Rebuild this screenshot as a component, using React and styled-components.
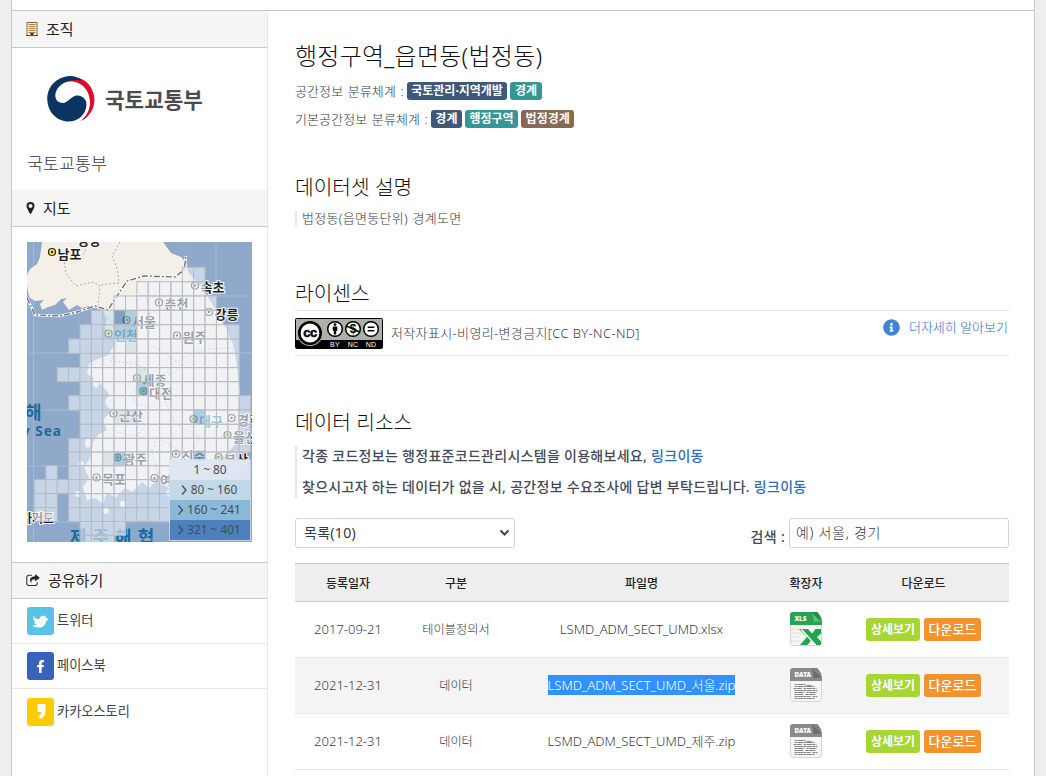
import React from "react";
import styled, { createGlobalStyle } from "styled-components";
import { FaInfoCircle, FaFacebookF } from "react-icons/fa";

const GlobalStyle = createGlobalStyle`
  *, *::before, *::after { box-sizing: border-box; }
  html, body { margin: 0; padding: 0; }
  body {
    height: 776px;
    overflow: hidden;
    background: #eeeeee;
    color: #343a45;
    font-family: "Noto Sans", "Noto Sans CJK KR", sans-serif;
    font-size: 13px;
    font-weight: 300;
  }
  h1, h2, h3, p, ul { margin: 0; padding: 0; font-weight: inherit; }
  a { color: inherit; text-decoration: none; }
`;

const Page = styled.div`
  width: 1024px;
  height: 776px;
  margin-left: 11px;
  padding-top: 10px;
  background: #fff;
  border: solid #c9c9c9;
  border-width: 0 1px;
`;

const Columns = styled.div`
  display: flex;
  height: 766px;
  border-top: 1px solid #c9c9c9;
`;

const Sidebar = styled.aside`
  width: 256px;
  flex: none;
  border-right: 1px solid #e6e7ee;
`;

const SideHeading = styled.h2`
  display: flex;
  align-items: center;
  height: 37px;
  padding: 0 14px 1px;
  gap: 8px;
  background: #f5f5f5;
  border-bottom: 1px solid #c9c9c9;
  border-top: ${(p) => (p.$ruled ? "1px solid #c9c9c9" : "0")};
  color: #222;
  font-size: 15px;
  font-weight: 400;
  line-height: 20px;
`;

const Organization = styled.div`
  display: flex;
  flex-direction: column;
  height: 142px;
  padding: 27px 15px 0;
`;

const OrgLogo = styled.div`
  display: flex;
  align-items: center;
  height: 49px;
  padding-left: 20px;
  gap: 9px;
  color: #4c4c4e;
  font-size: 21.3px;
  font-weight: 700;
  line-height: 46px;
`;

const OrgName = styled.a`
  margin-top: 24px;
  font-size: 17.4px;
  line-height: 30px;
`;

const MapPanel = styled.div`
  height: 335px;
  padding: 15px 15px 0;
  svg { display: block; }
`;

const ShareRow = styled.a`
  display: flex;
  align-items: center;
  height: 45px;
  padding-left: 15px;
  gap: 3px;
  border-bottom: ${(p) => (p.$last ? "0" : "1px solid #e6e7ee")};
  color: #3d434d;
  font-size: 13.2px;
  font-weight: 400;
  span { padding-bottom: 3px; }
`;

const ShareIcon = styled.i`
  display: flex;
  align-items: center;
  justify-content: center;
  width: 27px;
  height: 28px;
  border-radius: 3px;
  background: ${(p) => p.$color};
  color: #fff;
`;

const Main = styled.main`
  width: 714px;
  margin-left: 27px;
  padding-top: 25px;
`;

const Title = styled.h1`
  height: 41px;
  line-height: 40px;
  color: #111;
  font-size: 24px;
  letter-spacing: 0.25px;
  white-space: nowrap;
`;

const TagLine = styled.div`
  display: flex;
  align-items: center;
  height: 28px;
  gap: 3px;
  white-space: nowrap;
`;

const TagLabel = styled.span`
  padding-bottom: 2px;
  letter-spacing: 0.1px;
  word-spacing: 1px;
`;

const Tag = styled.span`
  height: 18px;
  padding: 0 4.500px;
  border-radius: 3px;
  background: ${(p) => p.$color};
  color: #fff;
  font-size: 12px;
  font-weight: 700;
  line-height: 18px;
`;

const SectionTitle = styled.h2`
  height: ${(p) => p.$height || 40}px;
  margin-top: ${(p) => p.$top}px;
  color: #111;
  font-size: 20.3px;
  line-height: 40px;
`;

const Description = styled.p`
  height: 16px;
  margin-top: 4px;
  padding-left: 5px;
  border-left: 2px solid #e6e7ee;
  letter-spacing: 0.3px;
  word-spacing: 1px;
  line-height: 15px;
`;

const License = styled.div`
  display: flex;
  align-items: center;
  height: 46px;
  border: solid #e6e7ee;
  border-width: 1px 0;
  gap: 8px;
  svg { flex: none; }
`;

const LicenseName = styled.span`
  padding-bottom: 2px;
  letter-spacing: 0.35px;
`;

const MoreLink = styled.a`
  display: flex;
  align-items: center;
  margin: 0 1px 11px auto;
  gap: 9px;
  color: #2a70c9;
  svg { color: #3f84d6; }
  span { padding-bottom: 2px; }
`;

const Notice = styled.div`
  display: flex;
  flex-direction: column;
  height: 52px;
  margin-top: 4px;
  padding-left: 5px;
  gap: 10px;
  border-left: 2px solid #e6e7ee;
  font-size: 14px;
  font-weight: 500;
  letter-spacing: 0.29px;
  line-height: 20px;
  white-space: nowrap;
  color: #444a55;
  p { height: 21px; }
  a { color: #2f6cb5; }
`;

const Toolbar = styled.div`
  display: flex;
  justify-content: space-between;
  height: 30px;
  margin-top: 20px;
  font-size: 14px;
`;

const Field = styled.div`
  display: flex;
  align-items: center;
  justify-content: space-between;
  width: 220px;
  height: 30px;
  padding: 0 4px 0 ${(p) => p.$inset}px;
  border: 1px solid #ced4e4;
  border-radius: 3px;
  background: #fff;
  letter-spacing: ${(p) => p.$tracking}px;
  line-height: 28px;
  font-weight: ${(p) => p.$weight || 300};
`;

const Search = styled.label`
  display: flex;
  gap: 4px;
  > span {
    padding-top: 9px;
    color: #444a55;
    font-weight: 500;
    letter-spacing: 0.3px;
    line-height: 20px;
  }
`;

const Row = styled.div`
  display: grid;
  grid-template-columns: 106px 110px 261px 68px 167px;
  align-items: center;
  justify-items: center;
  height: 56px;
  padding-bottom: 1px;
  background: ${(p) => (p.$shaded ? "#f4f4f4" : "#fff")};
  border-bottom: 1px solid #e6e7ee;
  font-size: 13px;
  white-space: nowrap;
`;

const HeaderRow = styled(Row)`
  height: 39px;
  margin-top: 15px;
  padding-bottom: 0;
  background: #eeeeee;
  border-top: 1px solid #c9c9c9;
  border-bottom: 1px solid #c9c9c9;
  color: #222;
  font-size: 12px;
  font-weight: 500;
`;

const Cell = styled.span`
  height: 20px;
  line-height: 20px;
  background: ${(p) => (p.$selected ? "#3390ff" : "transparent")};
  color: ${(p) => (p.$selected ? "#fff" : "inherit")};
`;

const TypeCell = styled(Cell)`
  font-size: 12.2px;
  line-height: 22px;
`;

const Actions = styled.div`
  display: flex;
  gap: 4px;
  padding-top: 1px;
`;

const Button = styled.a`
  width: ${(p) => p.$width}px;
  height: 23px;
  border-radius: 3px;
  background: ${(p) => p.$color};
  color: #fff;
  font-size: ${(p) => p.$size}px;
  font-weight: ${(p) => p.$weight};
  line-height: ${(p) => p.$line}px;
  text-align: center;
`;

const BuildingIcon = () => (
  <svg width="12" height="14" viewBox="0 0 12 14">
    <path d="M1 .5h10v13H1z" fill="#fff6e8" stroke="#9b5f2c" />
    <path d="M2.500 2.500h7M2.500 4.500h7M2.500 6.500h7M2.500 8.500h7M2.500 10.500h7" stroke="#b97b3d" />
    <path d="M4.500 11h3v3h-3z" fill="#333" />
    <path d="M0 13.500h12" stroke="#555" />
  </svg>
);

const PinIcon = () => (
  <svg width="9" height="12" viewBox="-.5 0 9 12">
    <path fillRule="evenodd" fill="#222" d="M4 0a4 4 0 0 1 4 4c0 1-.3 1.600-.7 2.400L4.700 11.600a.8.8 0 0 1-1.400 0L.7 6.400C.3 5.600 0 5 0 4a4 4 0 0 1 4-4Zm0 2a2 2 0 1 0 0 4 2 2 0 0 0 0-4Z" />
  </svg>
);

const ShareOutIcon = () => (
  <svg width="14" height="12" viewBox="0 0 14 12">
    <path fill="none" stroke="#333" strokeWidth="1.100" d="M6 1.200H2.800A2 2 0 0 0 .8 3.200v6.300a2 2 0 0 0 2 2h6.400a2 2 0 0 0 2-2V8.300" />
    <path fill="#222" d="M9.200 0 13.800 3.800 9.200 7.500V5.300C6.500 5.200 5 6 5.300 9.200 3 6 3.900 2.300 9.200 2.200Z" />
  </svg>
);

const BirdIcon = () => (
  <svg width="17" height="13" viewBox="0 0 17 13">
    <path fill="#fff" d="M1 1c2 2.400 4 3.100 6.500 3.200C7.600 1.500 9.800.2 12 .8c1 .2 1.700.8 2 1.700l2.500 2-2.100 1.200C13.700 10 10.700 12.700 6.500 12.600 4 12.600 2 11.900.4 10.500c1.900.1 3.200-.2 4.300-1C3.300 9.100 2.600 8.300 2.200 7.200l1.500-.1C2.200 6.300 1.400 5.200 1.300 3.900l1.400.4C1.500 3.300.8 2.500 1 1Z" />
  </svg>
);

const StoryMark = styled.svg`
  margin-left: 2px;
`;

const StoryIcon = () => (
  <StoryMark width="9" height="15" viewBox="0 0 9 15">
    <path fill="#fff" d="M.5 0h8v6.500c0 4.500-1.700 7.300-5 8.300L1.300 12.300C3.500 11.500 4.200 10 4.200 8H.5Z" />
  </StoryMark>
);

const TaegeukLogo = () => (
  <svg width="49" height="49" viewBox="0 0 49 49">
    <path fill="#df0a2c" d="M12 7.500C22 0 36 1 43 11c6 9 5.500 19 1 26-3 4.500-6 7.500-10.500 9C39.500 41 43 35 43 27.500 43 14 33 5.500 22 6.500 18 6.900 14.500 8.500 11 11Z" />
    <path fill="#0b3560" d="M23 1C9 2 0 12 .3 24.500.6 37 10 46.500 21.500 46.500c10 0 17.500-7.300 18-16.500.4-8.500-9-12.200-14.500-7.500-5.500 4.700-8 6.700-12.500 4.800C6 24.500 7.500 14.500 14 10 19 5.500 27 4 35.500 5.500 32 2.500 28 1 23 1Z" />
  </svg>
);

const CcBadge = () => (
  <svg width="88" height="31" viewBox="0 0 88 31" fontFamily="Liberation Sans, sans-serif">
    <rect x=".5" y=".5" width="87" height="30" rx="1" fill="#abb1a8" stroke="#000" />
    <path d="M1 22h86v8H1z" fill="#000" />
    <circle cx="15" cy="15" r="13" fill="#abb1a8" />
    <circle cx="15" cy="15" r="10.700" fill="#fff" stroke="#000" strokeWidth="2.600" />
    <text x="15" y="18.700" fontSize="13" fontWeight="700" textAnchor="middle" letterSpacing="-.4" stroke="#000" strokeWidth=".5">cc</text>
    <g fill="#fff" stroke="#000" strokeWidth="1.500">
      <circle cx="40" cy="11" r="7.300" /><circle cx="58" cy="11" r="7.300" /><circle cx="76" cy="11" r="7.300" />
    </g>
    <circle cx="40" cy="6.600" r="1.400" />
    <path d="M37.700 8.600h4.600v4.200h-1.100V16.500h-2.400v-3.700h-1.100z" />
    <text x="58" y="15.300" fontSize="12" fontWeight="700" textAnchor="middle">$</text>
    <path d="m51.500 8 13 6" stroke="#000" strokeWidth="1.500" />
    <path d="M72.700 9.300h6.600M72.700 12.700h6.600" stroke="#000" strokeWidth="1.500" />
    <g fill="#fff" fontSize="7" textAnchor="middle" letterSpacing=".3">
      <text x="40" y="28.800">BY</text><text x="58" y="28.800">NC</text><text x="76" y="28.800">ND</text>
    </g>
  </svg>
);

const FileIcon = ({ kind }) => {
  const xls = kind === "XLS";
  return (
    <svg width="32" height="34" viewBox="0 0 32 34" fontFamily="Noto Sans, sans-serif">
      {!xls && <path d="M0 0h32v34H0z" fill="#fff" />}
      <rect x=".5" y=".5" width="31" height="33" rx="2.500" fill="#f6f6f6" stroke="#d5d5d5" />
      <path d="M0 13V3a3 3 0 0 1 3-3h17.500L32 10v3Z" fill={xls ? "#27a452" : "#8a8b8d"} />
      <path d="M27 0h5v5Z" fill="#fff" />
      <path d="M20.500 0H27c2.500 2 4 4.500 5 10.500-4-1.500-6-1-8.500 0C24.300 6 23 3 20.500 0Z" fill={xls ? "#1d8f43" : "#808183"} />
      <path d="M20.500 0 32 10.500c-4-1.500-6-1-8.500 0C24.300 6 23 3 20.500 0Z" fill={xls ? "#60bf7d" : "#69696b"} />
      <text x="4.500" y="9.300" fontSize="6.800" fontWeight="900" fill="#fff" textLength={xls ? 12 : 16.500} lengthAdjust="spacingAndGlyphs">{kind}</text>
      {xls ? (
        <g>
          <path d="M1 17h9M1 21h9M1 25h9M1 29h9" stroke="#dedede" />
          <path d="M1 16h8v3H1z" fill="#f9edcf" />
          <path fill="#20a64d" d="M9 17h9l4 4.500 3.500-4.500H31v4.500L27 25l4 4.500V33h-5l-4.500-5-4 5H10l7-8Z" />
          <path stroke="#fff" strokeWidth="1.500" d="m11.500 17.500 14 15.500" />
        </g>
      ) : (
        <path d="M4.500 16.500h11m1 1h5M4.500 18.500h20m-21 2h8m2 0h13m-22 2h23m-23 2h10m2 0h10m-22 2h9m2 0h10m-21 2h16m2 0h5m-23 2h20" stroke="#77777a" strokeDasharray="3 .5 5 .4" strokeWidth=".9" />
      )}
    </svg>
  );
};

/* Density grid: latitude lines and the column span covered in each band. */
const LAT = [25.3, 39.7, 54, 68.3, 82.7, 97, 111.3, 125.6, 139.7, 153.7, 168, 182.3, 196.3, 210, 223.8, 237.6, 251.6, 265.6, 279.5, 293.3, 307];
const SPANS = [
  [[9, 11]], [[5, 11]], [[3, 12]], [[1, 12]], [[0, 14]], [[-1, 14]], [[0, 14]], [[-2, 14]], [[0, 14]], [[-1, 15]],
  [[0, 15]], [[0, 15]], [[-1, 15]], [[-1, 14]], [[-3, -2], [-1, 14]], [[-4, 12]], [[-4, -2], [-1, 9]], [[-4, -2], [-1, 9]], [[0, 4]], [[0, 3]],
];
const HOT = { "3,3": "#4b7cb5", "3,4": "#8dbdd8", "4,3": "#8dbdd8", "4,4": "#8dbdd8", "3,2": "#cee0e8", "4,2": "#cee0e8", "5,4": "#cee0e8", "7,5": "#cee0e8", "8,5": "#8dbdd8", "10,3": "#cee0e8", "10,4": "#cee0e8", "10,10": "#8dbdd8", "13,2": "#cee0e8", "13,3": "#8dbdd8", "13,10": "#8dbdd8" };
const cells = SPANS.flatMap((spans, r) =>
  spans.flatMap(([a, b]) =>
    Array.from({ length: b - a }, (_, i) => ({ r, c: a + i }))
  )
);

const CITIES = [
  [25, 10, "남포", 1, "#f6ef35"], [168, 43.5, "속초", 1], [132, 60.5, "춘천", 0], [182, 70, "강릉", 0],
  [99.5, 78, "서울", 0, "#c8e070"], [81.5, 91.5, "인천", 2, "#ece96a"], [150, 93.5, "원주", 0], [110, 136, "세종", 0, "#dfe67a"],
  [116.5, 149, "대전", 0, "#62b56e"], [86.5, 171.5, "군산", 0], [166.5, 177, "대구", 2, "#c8e070"], [204.5, 176, "경주", 0],
  [200.5, 193, "울산", 1, "#ece96a"], [90.5, 215.5, "광주", 0, "#62b56e"], [149, 212, "진주", 0], [191.5, 215, "부산", 0, "#dfe67a"],
  [69.5, 235.5, "목포", 0], [127.5, 236, "여수", 0],
];

const LEGEND = [
  ["1 ~ 80", "#dfe7f3", 0.88], ["80 ~ 160", "#c3d9e7", 0.94], ["160 ~ 241", "#87b7d8", 0.97], ["321 ~ 401", "#487fb9", 0.97],
];

const CoverageMap = () => (
  <svg width="225" height="300" viewBox="0 0 225 300" fontFamily="Noto Sans CJK KR, sans-serif">
    <rect width="225" height="300" fill="#8fa9cb" />
    <path d="M6.500 0v300M189 0v300M0 54h225M0 111h225M0 168h225M0 224h225M0 280h225" stroke="#a5bad7" fill="none" />
    <g fill="#f4f0e8">
      <path d="M15 0H136L144 11 154 15 160 22 161 30 172 42 181 55 190 70 200 88 207 105 210 125 213 150 211 175 213 195 206 205 196 215 185 226 175 232 165 225 158 236 148 232 140 245 130 238 122 246 115 240 105 250 98 246 88 256 80 250 76 262 68 256 60 258 56 245 62 236 57 225 64 215 66 200 72 192 80 188 76 178 83 170 78 160 82 152 76 145 70 138 60 132 62 122 68 118 82 113 84 108 90 100 84 92 78 86 80 76 75 68 62 64 55 66 50 63 42 68 36 60 40 56 34 57 28 63 21 65 15 68 13 62 17 58 8 59 3 56 1 50 0 43 0 33 3 27 10 22 13 15Z" />
      <circle cx="54" cy="222" r="3" /><circle cx="61" cy="246" r="4" /><circle cx="51" cy="252" r="3" />
      <circle cx="79" cy="269" r="3" /><circle cx="96" cy="262" r="3" /><ellipse cx="61" cy="201" rx="3" ry="5" />
      <ellipse cx="145" cy="251" rx="6" ry="4" /><ellipse cx="69" cy="140" rx="3" ry="6" />
    </g>
    <g fill="none" stroke="#aaa9b3" strokeWidth="1" strokeDasharray="2 2">
      <path d="m36 12 3 20 10 12 17-4 7 4-2 22M93 0l-8 14 5 12 2 15-20 2M61 0l-4 12-20 5M110 47l10 10 4 20-13 10M81 75l12 20-9 24 26 3 24 17 12-18 31-14 31-1M124 103l31 20-8 8-18 6M111 137l-5 23 16 6 13-14 13 30 25 13-12 19-31-19-5 16 8 29M82 166l18 17 20-2-10 13-21-4" />
    </g>
    <path d="m0 56 8 17 25 1 17-4 18-6 13 4 7-11 12-18 17-5 31 1 9-7 2-14" fill="none" stroke="#fff" strokeWidth="2.500" />
    <path d="m0 56 8 17 25 1 17-4 18-6 13 4 7-11 12-18 17-5 31 1 9-7 2-14" fill="none" stroke="#65677f" strokeWidth="1.300" strokeDasharray="6 2 2 2" />
    <g fill="#196a9e" fontWeight="700">
      <text x="-2" y="177" fontSize="18">해</text>
      <text x="-5" y="194" fontSize="13.500" letterSpacing="1" fontFamily="Noto Sans, sans-serif">y Sea</text>
      <text x="43" y="302" fontSize="18" letterSpacing="6">제주해협</text>
      <text x="205" y="248" fontSize="18">대</text>
      <text x="202" y="264" fontSize="12">Kor</text>
    </g>
    <g fontSize="13" fontWeight="700" fill="#222" stroke="#fff" strokeWidth="2" paintOrder="stroke">
      <text x="50" y="3">평양</text>
      {CITIES.map(([x, y, name, tone, dot]) => (
        <g key={name}>
          <text x={x + 5.5} y={y + 6.5} fill={tone === 2 ? "#34799f" : "#222"}>{name}</text>
          <circle cx={x} cy={y} r="3.500" fill={dot || "#fff"} stroke="#222" strokeWidth="1.200" paintOrder="normal" />
          <circle cx={x} cy={y} r="1.200" fill="#222" stroke="none" />
        </g>
      ))}
      <text x="-6" y="281" fontSize="12">가거도</text>
    </g>
    {cells.map(({ r, c }) => {
      const hot = HOT[`${r},${c}`];
      return (
        <rect key={`${r},${c}`} x={53 + 11.37 * c} y={LAT[r]} width="11.370" height={LAT[r + 1] - LAT[r]}
          fill={hot || "#ecf4fc"} fillOpacity={hot ? 0.68 : 0.6} stroke="#b7bac2" />
      );
    })}
    <rect x="142" y="217" width="82" height="82" fill="#d2dff0" fillOpacity=".7" />
    <g fontSize="11.800" fontWeight="400" fontFamily="Noto Sans, sans-serif" fill="#484b55" textAnchor="middle">
      {LEGEND.map(([label, color, alpha], i) => (
        <g key={label}>
          <rect x="143" y={218 + i * 20} width="80" height="20" fill={color} fillOpacity={alpha} />
          {i > 0 && <path d={`m${i === 1 ? 155 : 151.5} ${223.5 + i * 20} 4 4.500-4 4.500`} fill="none" stroke="#484b55" strokeWidth="1.300" />}
          <text x={i === 0 ? 183 : 187} y={232 + i * 20}>{label}</text>
        </g>
      ))}
    </g>
  </svg>
);

const FILES = [
  { date: "2017-09-21", type: "테이블정의서", name: "LSMD_ADM_SECT_UMD.xlsx", kind: "XLS" },
  { date: "2021-12-31", type: "데이터", name: "LSMD_ADM_SECT_UMD_서울.zip", kind: "DATA", selected: true },
  { date: "2021-12-31", type: "데이터", name: "LSMD_ADM_SECT_UMD_제주.zip", kind: "DATA" },
];

const NAVY = "#3d5878";
const TEAL = "#359696";
const BROWN = "#866a56";

export default function App() {
  return (
    <>
      <GlobalStyle />
      <Page>
        <Columns>
          <Sidebar>
            <SideHeading><BuildingIcon />조직</SideHeading>
            <Organization>
              <OrgLogo><TaegeukLogo />국토교통부</OrgLogo>
              <OrgName>국토교통부</OrgName>
            </Organization>
            <SideHeading><PinIcon />지도</SideHeading>
            <MapPanel><CoverageMap /></MapPanel>
            <SideHeading $ruled><ShareOutIcon />공유하기</SideHeading>
            <ShareRow><ShareIcon $color="#5bc2e7"><BirdIcon /></ShareIcon><span>트위터</span></ShareRow>
            <ShareRow><ShareIcon $color="#3a62bd"><FaFacebookF size={13} /></ShareIcon><span>페이스북</span></ShareRow>
            <ShareRow $last><ShareIcon $color="#fdcc00"><StoryIcon /></ShareIcon><span>카카오스토리</span></ShareRow>
          </Sidebar>
          <Main>
            <Title>행정구역_읍면동(법정동)</Title>
            <TagLine>
              <TagLabel>공간정보 분류체계 :</TagLabel>
              <Tag $color={NAVY}>국토관리·지역개발</Tag>
              <Tag $color={TEAL}>경계</Tag>
            </TagLine>
            <TagLine>
              <TagLabel>기본공간정보 분류체계 :</TagLabel>
              <Tag $color={NAVY}>경계</Tag>
              <Tag $color={TEAL}>행정구역</Tag>
              <Tag $color={BROWN}>법정경계</Tag>
            </TagLine>
            <SectionTitle $top={34}>데이터셋 설명</SectionTitle>
            <Description>법정동(읍면동단위) 경계도면</Description>
            <SectionTitle $top={46} $height={37}>라이센스</SectionTitle>
            <License>
              <CcBadge />
              <LicenseName>저작자표시-비영리-변경금지[CC BY-NC-ND]</LicenseName>
              <MoreLink><FaInfoCircle size={17} /><span>더자세히 알아보기</span></MoreLink>
            </License>
            <SectionTitle $top={46}>데이터 리소스</SectionTitle>
            <Notice>
              <p>각종 코드정보는 행정표준코드관리시스템을 이용해보세요, <a>링크이동</a></p>
              <p>찾으시고자 하는 데이터가 없을 시, 공간정보 수요조사에 답변 부탁드립니다. <a>링크이동</a></p>
            </Notice>
            <Toolbar>
              <Field $inset={8} $weight={400} $tracking={0.3}>
                목록(10)
                <svg width="11" height="8" viewBox="0 0 11 8"><path d="m1.500 1.500 4 4 4-4" fill="none" stroke="#444" strokeWidth="2" /></svg>
              </Field>
              <Search>
                <span>검색 :</span>
                <Field $inset={6} $tracking={0.7}>예) 서울, 경기</Field>
              </Search>
            </Toolbar>
            <HeaderRow>
              <span>등록일자</span><span>구분</span><span>파일명</span><span>확장자</span><span>다운로드</span>
            </HeaderRow>
            {FILES.map((f, i) => (
              <Row key={f.name} $shaded={i === 1}>
                <Cell>{f.date}</Cell>
                <TypeCell>{f.type}</TypeCell>
                <Cell $selected={f.selected}>{f.name}</Cell>
                <FileIcon kind={f.kind} />
                <Actions>
                  <Button $color="#a5d631" $width={54} $size={12} $weight={700} $line={24}>상세보기</Button>
                  <Button $color="#f1932e" $width={57} $size={13} $weight={500} $line={22}>다운로드</Button>
                </Actions>
              </Row>
            ))}
          </Main>
        </Columns>
      </Page>
    </>
  );
}
